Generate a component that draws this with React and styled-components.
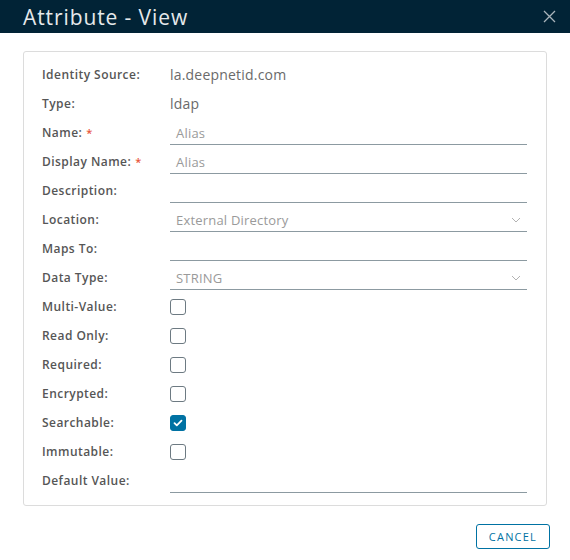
import React from 'react';
import styled, { createGlobalStyle } from 'styled-components';

const GlobalStyle = createGlobalStyle`
  html, body { margin: 0; padding: 0; background: #fff; }
  body { font-family: "Open Sans", "Noto Sans", sans-serif; }
  * { box-sizing: border-box; }
`;

const FIELDS = [
  { label: 'Identity Source:', kind: 'text', value: 'la.deepnetid.com' },
  { label: 'Type:', kind: 'text', value: 'ldap' },
  { label: 'Name:', required: true, kind: 'input', value: 'Alias' },
  { label: 'Display Name:', required: true, kind: 'input', value: 'Alias' },
  { label: 'Description:', kind: 'input', value: '' },
  { label: 'Location:', kind: 'select', value: 'External Directory' },
  { label: 'Maps To:', kind: 'input', value: '' },
  { label: 'Data Type:', kind: 'select', value: 'STRING' },
  { label: 'Multi-Value:', kind: 'check' },
  { label: 'Read Only:', kind: 'check' },
  { label: 'Required:', kind: 'check' },
  { label: 'Encrypted:', kind: 'check' },
  { label: 'Searchable:', kind: 'check', checked: true },
  { label: 'Immutable:', kind: 'check' },
  { label: 'Default Value:', kind: 'input', value: '' },
];

const Chevron = () => (
  <svg width="10" height="6" viewBox="0 0 10 6" fill="none">
    <path d="M1 1l4 4 4-4" stroke="#b3b3b3" strokeWidth="1" />
  </svg>
);

const Check = () => (
  <svg width="10" height="8" viewBox="0 0 10 8" fill="none">
    <path d="M1.5 4.2l2.3 2.2L8.5 1.6" stroke="#fff" strokeWidth="1.8" strokeLinecap="round" strokeLinejoin="round" />
  </svg>
);

const CloseIcon = () => (
  <svg width="13" height="13" viewBox="0 0 13 13" fill="none">
    <path d="M1 1l11 11M12 1L1 12" stroke="#a9b3ba" strokeWidth="1.3" />
  </svg>
);

const App = () => {
  return (
    <>
      <GlobalStyle />
      <Modal>
        <Header>
          <Title>Attribute - View</Title>
          <CloseButton aria-label="close"><CloseIcon /></CloseButton>
        </Header>
        <Body>
          <Card>
            {FIELDS.map((f) => (
              <Row key={f.label}>
                <Label>
                  {f.label}
                  {f.required && <Star>*</Star>}
                </Label>
                {f.kind === 'text' && <Value>{f.value}</Value>}
                {f.kind === 'input' && <Field>{f.value}</Field>}
                {f.kind === 'select' && (
                  <Field>
                    <span>{f.value}</span>
                    <Chevron />
                  </Field>
                )}
                {f.kind === 'check' && (
                  <Box checked={f.checked}>{f.checked && <Check />}</Box>
                )}
              </Row>
            ))}
          </Card>
        </Body>
        <Footer>
          <Button>CANCEL</Button>
        </Footer>
      </Modal>
    </>
  );
};

export default App;

const Modal = styled.div`
  width: 570px;
  height: 560px;
  display: flex;
  flex-direction: column;
  background: #fff;
`;

const Header = styled.div`
  height: 33px;
  background: #012336;
  display: flex;
  align-items: center;
  justify-content: space-between;
  padding: 0 14px 0 23px;
`;

const Title = styled.h1`
  margin: 0;
  font-family: "Open Sans", sans-serif;
  font-weight: 400;
  font-size: 21px;
  letter-spacing: 0.9px;
  color: #e6e9eb;
`;

const CloseButton = styled.button`
  background: none;
  border: none;
  padding: 0;
  display: flex;
  cursor: pointer;
`;

const Body = styled.div`
  padding: 18px 23px 0 23px;
`;

const Card = styled.div`
  border: 1px solid #dcdcdc;
  border-radius: 3px;
  padding: 8px 19px 10px 18px;
`;

const Row = styled.div`
  display: grid;
  grid-template-columns: 128px 1fr;
  align-items: center;
  height: 29px;
`;

const Label = styled.div`
  font-size: 12px;
  font-weight: 600;
  letter-spacing: 0.45px;
  color: #565656;
  white-space: nowrap;
`;

const Star = styled.span`
  color: #e8553a;
  margin-left: 4px;
  font-size: 11px;
`;

const Value = styled.div`
  font-size: 14px;
  letter-spacing: 0.2px;
  color: #6a6a6a;
`;

const Field = styled.div`
  align-self: end;
  height: 24px;
  margin-bottom: 2px;
  border-bottom: 1px solid #8c9aa1;
  display: flex;
  align-items: center;
  justify-content: space-between;
  padding: 0 6px;
  font-size: 13px;
  letter-spacing: 0.2px;
  color: #9a9a9a;
`;

const Box = styled.div`
  width: 16px;
  height: 16px;
  border-radius: 3px;
  border: 1px solid ${(p) => (p.checked ? '#0072a3' : '#6d7a82')};
  background: ${(p) => (p.checked ? '#0072a3' : '#fff')};
  display: flex;
  align-items: center;
  justify-content: center;
`;

const Footer = styled.div`
  display: flex;
  justify-content: flex-end;
  padding: 18px 20px 0 0;
`;

const Button = styled.button`
  height: 25px;
  padding: 0 12px;
  border: 1px solid #0072a3;
  border-radius: 3px;
  background: #fff;
  color: #0072a3;
  font-family: "Open Sans", sans-serif;
  font-size: 11px;
  letter-spacing: 1.2px;
  cursor: pointer;
`;
